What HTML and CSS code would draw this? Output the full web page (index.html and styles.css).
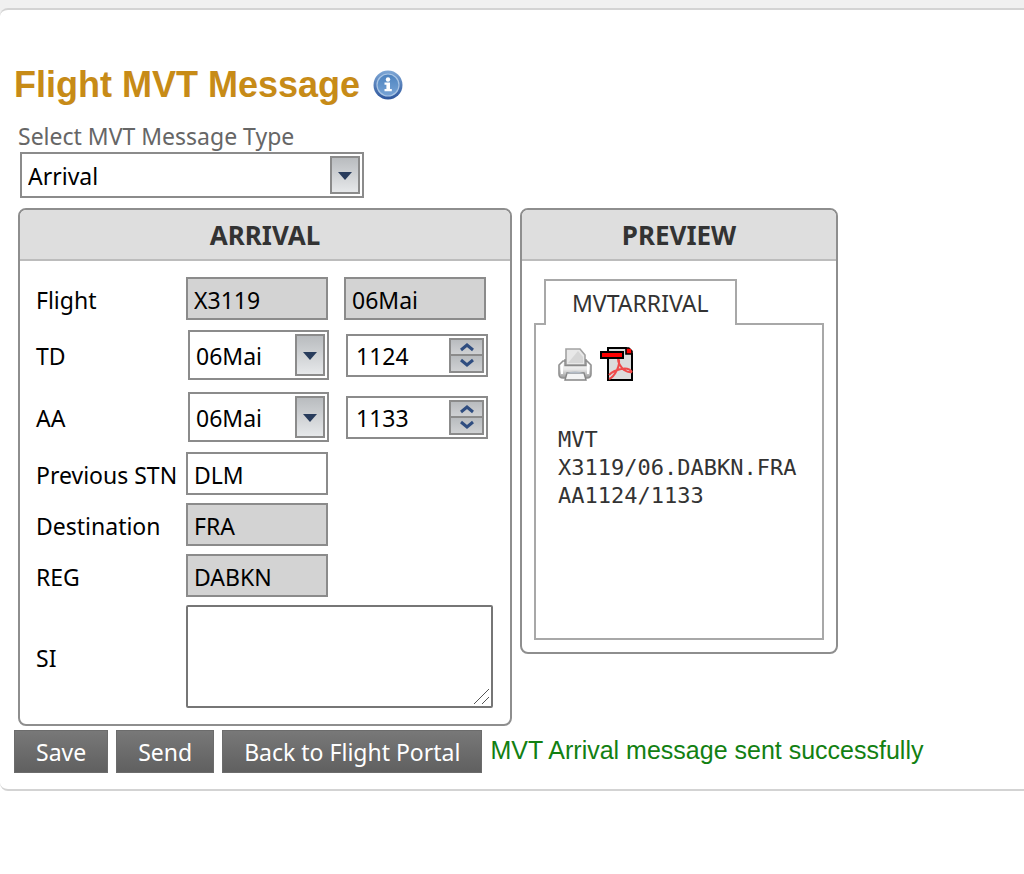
FILE: index.html
```html
<!DOCTYPE html>
<html lang="en">
<head>
<meta charset="utf-8">
<title>Flight MVT Message</title>
<link rel="stylesheet" href="styles.css">
</head>
<body>
<div class="strip"></div>
<main class="page">
  <header class="page-head">
    <h1 class="title">Flight MVT Message</h1>
    <svg class="info" viewBox="0 0 30 30" role="img" aria-label="Information">
      <defs>
        <linearGradient id="ball" x1="0" y1="0" x2="0" y2="1"><stop offset="0" stop-color="#7fa8d6"/><stop offset="1" stop-color="#2c559c"/></linearGradient>
        <linearGradient id="core" x1="0" y1="0" x2="0" y2="1"><stop offset="0" stop-color="#4c82be"/><stop offset="1" stop-color="#78a4d6"/></linearGradient>
      </defs>
      <circle cx="15" cy="15" r="14.500" fill="url(#ball)"/>
      <circle cx="15" cy="15" r="11" fill="url(#core)" stroke="#a9c5e4" stroke-width="1.2"/>
      <circle cx="15" cy="9.500" r="2.200" fill="#fff"/>
      <path d="M11.500 12.500h5.500v6.500h1.800v2.200h-7.300V19h1.900v-4.300h-1.900z" fill="#fff"/>
    </svg>
  </header>

  <form class="form">
    <label class="type-label" for="type">Select MVT Message Type</label>
    <div class="combo combo-wide">
      <select id="type"><option>Arrival</option></select>
      <span class="drop"></span>
    </div>

    <div class="panels">
      <section class="panel">
        <h2 class="panel-title">ARRIVAL</h2>
        <div class="fields">
          <div class="row">
            <label for="flight">Flight</label>
            <input class="text" id="flight" value="X3119" readonly>
            <input class="text" aria-label="Flight date" value="06Mai" readonly>
          </div>
          <div class="row row-time">
            <label for="td">TD</label>
            <div class="combo"><select id="td"><option>06Mai</option></select><span class="drop"></span></div>
            <div class="spin">
              <input aria-label="TD time" value="1124">
              <div class="steps">
                <button type="button" aria-label="Increase TD"><svg viewBox="0 0 16 10"><path d="M2 8l6-5 6 5"/></svg></button>
                <button type="button" aria-label="Decrease TD"><svg viewBox="0 0 16 10"><path d="M2 2l6 5 6-5"/></svg></button>
              </div>
            </div>
          </div>
          <div class="row row-time">
            <label for="aa">AA</label>
            <div class="combo"><select id="aa"><option>06Mai</option></select><span class="drop"></span></div>
            <div class="spin">
              <input aria-label="AA time" value="1133">
              <div class="steps">
                <button type="button" aria-label="Increase AA"><svg viewBox="0 0 16 10"><path d="M2 8l6-5 6 5"/></svg></button>
                <button type="button" aria-label="Decrease AA"><svg viewBox="0 0 16 10"><path d="M2 2l6 5 6-5"/></svg></button>
              </div>
            </div>
          </div>
          <div class="row">
            <label for="prev">Previous STN</label>
            <input class="text" id="prev" value="DLM">
          </div>
          <div class="row">
            <label for="dest">Destination</label>
            <input class="text" id="dest" value="FRA" readonly>
          </div>
          <div class="row">
            <label for="reg">REG</label>
            <input class="text" id="reg" value="DABKN" readonly>
          </div>
          <div class="row">
            <label for="si">SI</label>
            <div class="si-box">
              <textarea class="si" id="si"></textarea>
              <svg class="grip" viewBox="0 0 17 17"><path d="M1 16L16 1M9 16l7-7"/></svg>
            </div>
          </div>
        </div>
      </section>

      <section class="panel">
        <h2 class="panel-title">PREVIEW</h2>
        <div class="preview">
          <button class="tab" type="button">MVTARRIVAL</button>
          <div class="sheet">
            <div class="tools">
              <button type="button" aria-label="Print">
                <svg viewBox="0 0 34 34">
                  <defs>
                    <linearGradient id="body" x1="0" y1="0" x2="0" y2="1"><stop offset="0" stop-color="#fff"/><stop offset=".5" stop-color="#e6e6e6"/><stop offset="1" stop-color="#999"/></linearGradient>
                  </defs>
                  <path d="M5 14h24l4 4v9q0 4-4 4H5q-4 0-4-4v-9z" fill="url(#body)" stroke="#909090" stroke-width="1.6"/>
                  <path d="M8 18V2h14l5 6v10z" fill="#e8e8e8" stroke="#a2a2a2" stroke-width="1.6"/>
                  <path d="M10 16L20 4l5 6v6z" fill="#d6d6d6"/>
                  <path d="M7 12v6.500h21V12" fill="none" stroke="#8a8a8a" stroke-width="1.4"/>
                  <path d="M9 26h17l2 7H7z" fill="#f4f4f4" stroke="#858585" stroke-width="1.4"/>
                  <path d="M8 26.500q9-4 18 0" fill="#b4bcc6"/>
                  <path d="M4 17v10M30 17v10" stroke="#fff" stroke-width="2"/>
                </svg>
              </button>
              <button type="button" aria-label="PDF">
                <svg viewBox="0 0 34 34">
                  <path d="M8 1h18l6 6v26H8z" fill="#dcdcdc" stroke="#000" stroke-width="2"/>
                  <path d="M26 1v6h6V1z" fill="#f00" stroke="#000" stroke-width="1.6"/>
                  <path d="M29 0h5v5z" fill="#fff"/>
                  <path d="M18 12c2 1 1 7-1 11-2 4-5 8-8 9M9 28c3-3 7-5 12-6 5-1 9 0 11 3M18 12c0 4 3 8 6 11 3 2 5 3 8 2" fill="none" stroke="#ef4a4a" stroke-width="2"/>
                  <path d="M1 5h22v6H1z" fill="#f00" stroke="#000" stroke-width="2"/>
                </svg>
              </button>
            </div>
            <pre class="message">MVT
X3119/06.DABKN.FRA
AA1124/1133</pre>
          </div>
        </div>
      </section>
    </div>

    <div class="actions">
      <button class="btn" type="button">Save</button>
      <button class="btn" type="button">Send</button>
      <button class="btn" type="button">Back to Flight Portal</button>
      <output class="status">MVT Arrival message sent successfully</output>
    </div>
  </form>
</main>
</body>
</html>
```
FILE: styles.css
```css
* { box-sizing: border-box; }

body {
  margin: 0;
  background: #fff;
  font-family: "Noto Sans", "Open Sans", sans-serif;
  font-size: 23px;
  line-height: 32px;
  color: #000;
}

input, select, textarea, button { font: inherit; color: inherit; margin: 0; }
button { padding: 0; border: 0; background: none; }

.strip { height: 16px; margin-bottom: -8px; background: #f0f0f0; }

.page {
  padding: 53px 14px 16px;
  background: #fff;
  border-top: 2px solid #d3d3d3;
  border-bottom: 2px solid #d3d3d3;
  border-radius: 8px 0 0 8px;
}

.page-head { display: flex; align-items: center; gap: 13px; }
.title {
  margin: 0;
  font: bold 36px/44px "Liberation Sans", Arial, sans-serif;
  color: #c78b17;
}
.info { width: 30px; height: 30px; }

.type-label { display: block; margin: 13px 4px 0; color: #666; }

.combo { position: relative; width: 141px; height: 50px; border: 2px solid #8b8b8b; background: #fff; }
.combo-wide { width: 344px; height: 46px; margin: 0 6px; }
.combo select {
  appearance: none;
  display: block;
  width: 100%;
  height: 100%;
  padding: 2px 36px 0 6px;
  border: 0;
  background: none;
}
.drop {
  position: absolute;
  top: 2px; right: 2px; bottom: 2px;
  width: 30px;
  border: 2px solid #8b8b8b;
  background: linear-gradient(#b9bcbf, #e6e8ea);
  pointer-events: none;
}
.drop::after {
  content: "";
  position: absolute;
  top: 50%; left: 50%;
  margin: -3px 0 0 -7px;
  border: 7px solid transparent;
  border-top: 8px solid #283c5c;
  border-bottom: 0;
}

.panels { display: flex; align-items: flex-start; gap: 8px; margin: 10px 4px 0; }
.panel { border: 2px solid #8e8e8e; border-radius: 8px; overflow: hidden; }
.panel-title {
  margin: 0;
  padding: 9px 0 8px;
  border-bottom: 2px solid #bcbcbc;
  background: #dedede;
  font-size: 26px;
  line-height: 32px;
  text-align: center;
  color: #333;
}

.fields { display: flex; flex-direction: column; gap: 8px; padding: 16px 17px 16px 16px; }
.row { display: flex; align-items: center; }
.row > label { width: 150px; padding-top: 2px; white-space: nowrap; }
.text { width: 142px; height: 43px; padding: 2px 6px 0; border: 2px solid #8b8b8b; border-radius: 0; background: #fff; }
.text:read-only { background: #d3d3d3; }
.text + .text { margin-left: 16px; }
.row-time { padding: 2px 0; }
.row-time > label { width: 152px; }
.spin { display: flex; width: 142px; height: 43px; margin-left: 17px; padding: 2px; border: 2px solid #8b8b8b; background: #fff; }
.spin input { flex: 1; min-width: 0; padding: 2px 6px 0; border: 0; background: none; }
.steps { display: flex; flex-direction: column; width: 35px; border: 2px solid #8b8b8b; }
.steps button { display: flex; flex: 1; align-items: center; justify-content: center; background: linear-gradient(#b9bcbf, #cfd1d3); }
.steps button + button { border-top: 2px solid #8b8b8b; }
.steps svg { width: 16px; height: 10px; fill: none; stroke: #2f4d80; stroke-width: 3; }

.si-box { position: relative; display: flex; }
.si { width: 307px; height: 103px; border: 2px solid #767676; border-radius: 2px; resize: none; }
.grip { position: absolute; right: 3px; bottom: 3px; width: 17px; height: 17px; fill: none; stroke: #555; stroke-width: 1; }

.preview { padding: 18px 12px 12px; }
.tab {
  position: relative;
  display: block;
  height: 46px;
  margin: 0 10px -2px;
  padding: 0 26px;
  border: 2px solid #a8a8a8;
  border-bottom: 0;
  background: #fff;
  color: #333;
}
.sheet { min-width: 290px; min-height: 317px; padding: 22px; border: 2px solid #a8a8a8; }
.tools { display: flex; gap: 8px; }
.tools button, .tools svg { display: block; width: 34px; height: 34px; }
.message { margin: 45px 0 0; font: 22px/28px "DejaVu Sans Mono", monospace; color: #333; }

.actions { display: flex; flex-wrap: wrap; align-items: center; gap: 8px; margin-top: 4px; }
.btn { height: 43px; padding: 0 21px; background: linear-gradient(#787878, #606060); border: 1px solid #6c6c6c; color: #fff; }
.status { padding-bottom: 3px; font: 25px/32px "Liberation Sans", Arial, sans-serif; color: #128012; }
```
